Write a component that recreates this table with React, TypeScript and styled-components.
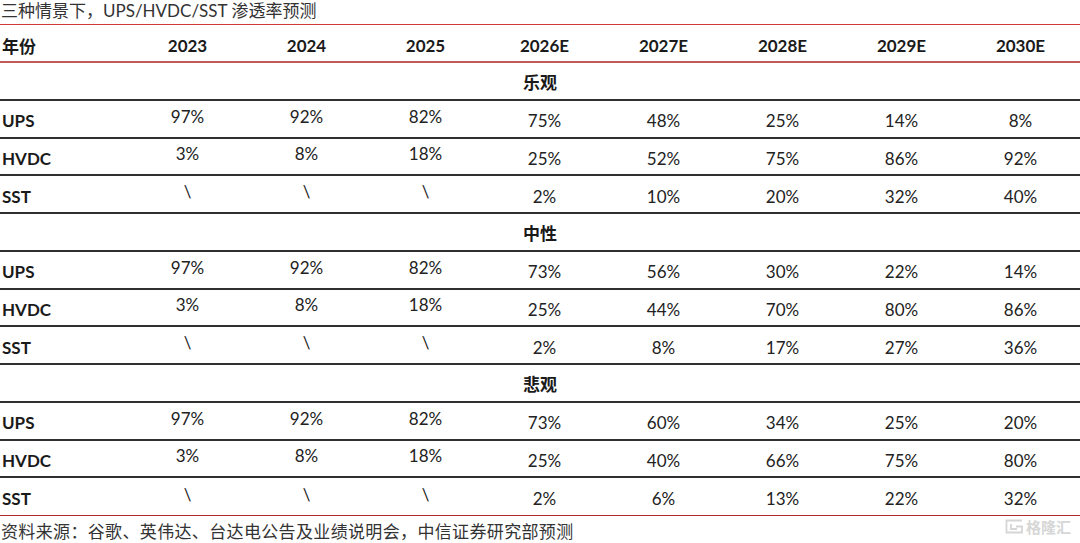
import React from "react";
import styled, { createGlobalStyle } from "styled-components";

const GlobalStyle = createGlobalStyle`
  html, body { margin: 0; padding: 0; background: #ffffff; }
  body {
    font-family: Lato, "Noto Sans CJK SC", sans-serif;
    color: #222;
  }
  * { box-sizing: border-box; }
`;

const Page = styled.div`
  position: relative;
  width: 1080px;
  height: 543px;
  overflow: hidden;
  background: #fff;
`;

const Title = styled.div`
  height: 24px;
  padding-left: 1px;
  font-family: Lato, "Noto Sans CJK SC", sans-serif;
  font-size: 17px;
  line-height: 22px;
  color: #333;
`;

const Table = styled.div`
  border-top: 1px solid #d03a36;
  display: flex;
  flex-direction: column;
`;

const COLS = "128px repeat(8, 119px)";

const HeaderRow = styled.div`
  display: grid;
  grid-template-columns: ${COLS};
  align-items: center;
  height: 38px;
  border-bottom: 2px solid #c25a5c;
`;

const HeadCell = styled.div<{ $left?: boolean }>`
  font-family: Lato, "Noto Sans CJK SC", sans-serif;
  font-weight: 700;
  font-size: 17px;
  color: #1a1a1a;
  text-align: ${(p) => (p.$left ? "left" : "center")};
  padding-left: ${(p) => (p.$left ? "2px" : "0")};
  padding-top: 4px;
`;

const SectionRow = styled.div`
  height: 37.75px;
  display: flex;
  align-items: center;
  justify-content: center;
  border-bottom: 2px solid #303030;
  font-family: "Noto Sans CJK SC", sans-serif;
  font-weight: 700;
  font-size: 17px;
  color: #1a1a1a;
  padding-top: 2px;
`;

const DataRow = styled.div<{ $last?: boolean }>`
  display: grid;
  grid-template-columns: ${COLS};
  align-items: center;
  height: 37.75px;
  border-bottom: ${(p) => (p.$last ? "1px solid #b3262c" : "2px solid #303030")};
`;

const Label = styled.div`
  font-family: Lato, sans-serif;
  font-weight: 700;
  font-size: 17px;
  color: #1a1a1a;
  padding-left: 2px;
  padding-top: 4px;
`;

const Value = styled.div<{ $raised?: boolean }>`
  font-family: Lato, sans-serif;
  font-size: 17px;
  color: #222;
  text-align: center;
  padding-top: ${(p) => (p.$raised ? "0" : "4px")};
  padding-bottom: ${(p) => (p.$raised ? "5px" : "0")};
`;

const Footer = styled.div`
  padding-top: 4px;
  padding-left: 1px;
  font-family: "Noto Sans CJK SC", sans-serif;
  font-size: 17px;
  line-height: 22px;
  letter-spacing: 0.35px;
  color: #333;
`;

const Watermark = styled.div`
  position: absolute;
  right: 9px;
  bottom: 6px;
  display: flex;
  align-items: center;
  gap: 2px;
  color: #d6d6d6;
  font-family: "Noto Sans CJK SC", sans-serif;
  font-size: 15px;
  font-weight: 700;
  letter-spacing: 0px;
`;

const years = ["2023", "2024", "2025", "2026E", "2027E", "2028E", "2029E", "2030E"];

type Scenario = { name: string; rows: { label: string; values: string[] }[] };

const scenarios: Scenario[] = [
  {
    name: "乐观",
    rows: [
      { label: "UPS", values: ["97%", "92%", "82%", "75%", "48%", "25%", "14%", "8%"] },
      { label: "HVDC", values: ["3%", "8%", "18%", "25%", "52%", "75%", "86%", "92%"] },
      { label: "SST", values: ["\\", "\\", "\\", "2%", "10%", "20%", "32%", "40%"] },
    ],
  },
  {
    name: "中性",
    rows: [
      { label: "UPS", values: ["97%", "92%", "82%", "73%", "56%", "30%", "22%", "14%"] },
      { label: "HVDC", values: ["3%", "8%", "18%", "25%", "44%", "70%", "80%", "86%"] },
      { label: "SST", values: ["\\", "\\", "\\", "2%", "8%", "17%", "27%", "36%"] },
    ],
  },
  {
    name: "悲观",
    rows: [
      { label: "UPS", values: ["97%", "92%", "82%", "73%", "60%", "34%", "25%", "20%"] },
      { label: "HVDC", values: ["3%", "8%", "18%", "25%", "40%", "66%", "75%", "80%"] },
      { label: "SST", values: ["\\", "\\", "\\", "2%", "6%", "13%", "22%", "32%"] },
    ],
  },
];

const Logo = () => (
  <svg width="19" height="15" viewBox="0 0 19 15" fill="none" stroke="#d6d6d6" strokeWidth="1.8">
    <path d="M17 1.5H1.5v12h15.5V7.5h-6" />
    <path d="M6 5v5h6" />
  </svg>
);

export default function App() {
  return (
    <Page>
      <GlobalStyle />
      <Title>三种情景下，UPS/HVDC/SST 渗透率预测</Title>
      <Table>
        <HeaderRow>
          <HeadCell $left>年份</HeadCell>
          {years.map((y) => (
            <HeadCell key={y}>{y}</HeadCell>
          ))}
        </HeaderRow>
        {scenarios.map((s, si) => (
          <React.Fragment key={s.name}>
            <SectionRow>{s.name}</SectionRow>
            {s.rows.map((r, ri) => (
              <DataRow key={r.label} $last={si === scenarios.length - 1 && ri === s.rows.length - 1}>
                <Label>{r.label}</Label>
                {r.values.map((v, vi) => (
                  <Value key={vi} $raised={vi < 3}>
                    {v}
                  </Value>
                ))}
              </DataRow>
            ))}
          </React.Fragment>
        ))}
      </Table>
      <Footer>资料来源：谷歌、英伟达、台达电公告及业绩说明会，中信证券研究部预测</Footer>
      <Watermark>
        <Logo />
        格隆汇
      </Watermark>
    </Page>
  );
}
